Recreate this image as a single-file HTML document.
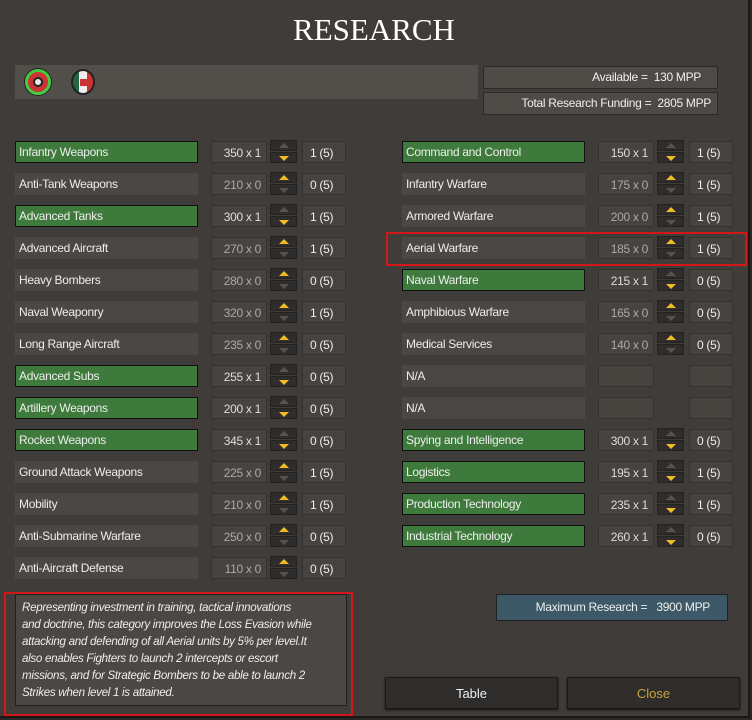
<!DOCTYPE html><html><head><style>
body{margin:0;width:752px;height:720px;background:#2a2826;overflow:hidden;font-family:"Liberation Sans",sans-serif;position:relative}
.win{position:absolute;left:0;top:0;width:748px;height:716px;background:#3f3c39;border-right:2px solid #1a1918;border-bottom:2px solid #1a1918}
.a{position:absolute;box-sizing:border-box}
.t{color:#eee;font-size:12px;letter-spacing:-0.3px;line-height:22px;padding-left:4px;white-space:nowrap}
.nm{background:#4a4744;height:22px}
.g{background:#3d7a3b;border:1px solid #111;line-height:20px;padding-left:3px}
.c{background:#47443f;height:22px;border-radius:2px;text-align:right;padding-right:5px;font-size:12px;letter-spacing:-0.3px;line-height:22px;color:#ddd;border:1px solid #333}
.c.d{color:#aaa}
.lv{background:#47443f;height:22px;border-radius:2px;font-size:12px;letter-spacing:-0.3px;line-height:22px;color:#eee;padding-left:7px;border:1px solid #333}
.ar{width:27px;height:11px;background:#2f2d2b;border:1px solid #222}
.up::after{content:"";position:absolute;left:8px;top:2px;border-left:5px solid transparent;border-right:5px solid transparent;border-bottom:5px solid #575450}
.dn::after{content:"";position:absolute;left:8px;top:3px;border-left:5px solid transparent;border-right:5px solid transparent;border-top:5px solid #575450}
.up.on::after{border-bottom-color:#f0b92a}
.dn.on::after{border-top-color:#f0b92a}
</style></head><body><div class="win">
<div class="a" style="left:0;top:12px;width:748px;text-align:center;font-family:'Liberation Serif',serif;font-size:31px;color:#fff">RESEARCH</div>
<div class="a" style="left:15px;top:65px;width:463px;height:34px;background:#524f4b"></div>
<div class="a" style="left:25px;top:69px;width:26px;height:26px;border-radius:50%;background:#c33;border:3px solid #4c4;box-shadow:0 0 0 1px #222"><div class="a" style="left:5px;top:5px;width:10px;height:10px;border-radius:50%;background:#eee;border:2px solid #222"></div></div>
<div class="a" style="left:71px;top:69px;width:24px;height:26px;border-radius:50%;background:linear-gradient(90deg,#264 0 30%,#eee 30% 70%,#c33 70%);border:2px solid #222"><div class="a" style="left:7px;top:8px;width:7px;height:7px;background:#c33"></div></div>
<div class="a t" style="left:483px;top:66px;width:235px;height:23px;background:#4e4b47;border:1px solid #2c2a28;text-align:right;padding-right:16px;line-height:21px">Available =&nbsp; 130 MPP</div>
<div class="a t" style="left:483px;top:92px;width:235px;height:23px;background:#4e4b47;border:1px solid #2c2a28;text-align:right;padding-right:6px;line-height:21px">Total Research Funding =&nbsp; 2805 MPP</div>
<div id="rows"></div>
<div class="a" style="left:386px;top:232px;width:361px;height:34px;border:2px solid #d01818"></div>
<div class="a" style="left:4px;top:592px;width:349px;height:124px;border:2px solid #d01818"></div>
<div class="a" style="left:15px;top:594px;width:332px;height:112px;background:#4a4744;border:1px solid #222;color:#eee;font-style:italic;font-size:11.6px;letter-spacing:-0.3px;line-height:17px;padding:4px 6px;white-space:nowrap;overflow:hidden">Representing investment in training, tactical innovations<br>and doctrine, this category improves the Loss Evasion while<br>attacking and defending of all Aerial units by 5% per level.It<br>also enables Fighters to launch 2 intercepts or escort<br>missions, and for Strategic Bombers to be able to launch 2<br>Strikes when level 1 is attained.</div>
<div class="a" style="left:496px;top:594px;width:232px;height:27px;background:#3d5968;border:1px solid #222;color:#eee;font-size:12px;letter-spacing:-0.3px;line-height:25px;text-align:right;padding-right:17px">Maximum Research =&nbsp;&nbsp; 3900 MPP</div>
<div class="a" style="left:385px;top:677px;width:173px;height:32px;background:#2f2d2b;border:1px solid #1c1b1a;box-shadow:0 1px 2px #111;color:#eee;font-size:13px;line-height:32px;text-align:center">Table</div>
<div class="a" style="left:567px;top:677px;width:173px;height:32px;background:#2f2d2b;border:1px solid #1c1b1a;box-shadow:0 1px 2px #111;color:#c9a23e;font-size:13px;line-height:32px;text-align:center">Close</div>
</div>
<script>
var L=[["Infantry Weapons",1,350,1,1],["Anti-Tank Weapons",0,210,0,0],["Advanced Tanks",1,300,1,1],["Advanced Aircraft",0,270,0,1],["Heavy Bombers",0,280,0,0],["Naval Weaponry",0,320,0,1],["Long Range Aircraft",0,235,0,0],["Advanced Subs",1,255,1,0],["Artillery Weapons",1,200,1,0],["Rocket Weapons",1,345,1,0],["Ground Attack Weapons",0,225,0,1],["Mobility",0,210,0,1],["Anti-Submarine Warfare",0,250,0,0],["Anti-Aircraft Defense",0,110,0,0]];
var R=[["Command and Control",1,150,1,1],["Infantry Warfare",0,175,0,1],["Armored Warfare",0,200,0,1],["Aerial Warfare",0,185,0,1],["Naval Warfare",1,215,1,0],["Amphibious Warfare",0,165,0,0],["Medical Services",0,140,0,0],["N/A",0,null],["N/A",0,null],["Spying and Intelligence",1,300,1,0],["Logistics",1,195,1,1],["Production Technology",1,235,1,1],["Industrial Technology",1,260,1,0]];
var h="";
function row(r,y,x0){
 h+='<div class="a t nm'+(r[1]?' g':'')+'" style="left:'+x0+'px;top:'+y+'px;width:183px">'+r[0]+'</div>';
 var d=x0-15;
 if(r[2]==null){h+='<div class="a c" style="left:'+(211+d)+'px;top:'+y+'px;width:56px"></div><div class="a lv" style="left:'+(302+d)+'px;top:'+y+'px;width:44px"></div>';return;}
 h+='<div class="a c'+(r[3]?'':' d')+'" style="left:'+(211+d)+'px;top:'+y+'px;width:56px">'+r[2]+' x '+r[3]+'</div>';
 h+='<div class="a ar up'+(r[3]?'':' on')+'" style="left:'+(270+d)+'px;top:'+(y-1)+'px"></div>';
 h+='<div class="a ar dn'+(r[3]?' on':'')+'" style="left:'+(270+d)+'px;top:'+(y+11)+'px"></div>';
 h+='<div class="a lv" style="left:'+(302+d)+'px;top:'+y+'px;width:44px">'+r[4]+' (5)</div>';
}
L.forEach(function(r,i){row(r,141+32*i,15)});
R.forEach(function(r,i){row(r,141+32*i,402)});
document.getElementById("rows").outerHTML=h;
</script>
</body></html>
